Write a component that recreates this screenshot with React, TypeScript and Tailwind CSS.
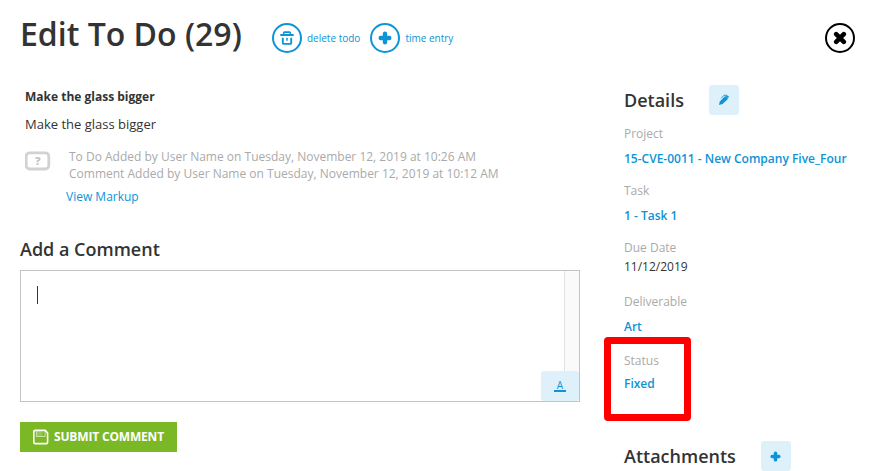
import type { ReactNode } from "react";

function PlusIcon({ size }: { size: number }) {
  return (
    <svg width={size} height={size} viewBox="0 0 14 14" fill="none" stroke="currentColor" strokeWidth="4.4" strokeLinecap="round">
      <path d="M7 2.7v8.6M2.7 7h8.6" />
    </svg>
  );
}

function TrashIcon() {
  return (
    <svg width="14" height="14" viewBox="0 0 14 14" fill="none" stroke="currentColor" strokeWidth="1.9">
      <path d="M1 4h12" strokeLinecap="round" />
      <path d="M3.7 3.6V1.9a.8.8 0 0 1 .8-.8h5a.8.8 0 0 1 .8.8v1.7" strokeWidth="1.6" />
      <path d="M2.8 6.8v5.1a1 1 0 0 0 1 1h6.4a1 1 0 0 0 1-1V6.8" />
      <path d="M7 6.8v3" strokeWidth="1.5" />
    </svg>
  );
}

function PencilIcon() {
  return (
    <svg width="12" height="12" viewBox="0 0 12 12" fill="none">
      <path d="M1 11l.8-3.6L7.2 1.9l2.9 2.8L4.6 10z" fill="currentColor" />
      <path d="M7.6 2.2l1-.9 2.3 1-.8 2z" fill="currentColor" />
      <path d="M3.2 4.2L6 1.2l3 .1" stroke="currentColor" strokeWidth="0.9" />
    </svg>
  );
}

function SaveIcon() {
  return (
    <svg width="16" height="16" viewBox="0 0 16 16" fill="none" stroke="currentColor">
      <path d="M2.2 1.4h10L14.6 4v9.2a1.4 1.4 0 0 1-1.4 1.4h-11a1.4 1.4 0 0 1-1.4-1.4V2.8a1.4 1.4 0 0 1 1.4-1.4z" strokeWidth="1.6" />
      <path d="M3.5 1.8v5.7h8.6V1.8" strokeWidth="1" opacity="0.6" />
      <path d="M4 2h5.5v5H4z" fill="currentColor" stroke="none" opacity="0.2" />
    </svg>
  );
}

function Action({ label, children }: { label: string; children: ReactNode }) {
  return (
    <a className="flex items-center gap-[5px] text-[10px] leading-[14px] text-[#0c94d6]">
      <span className="flex size-[30px] items-center justify-center rounded-full border-2 border-[#0c94d6]">{children}</span>
      {label}
    </a>
  );
}

function Field({ label, value, className }: { label: string; value: string; className: string }) {
  return (
    <div className={className}>
      <dt className="h-[25px] leading-[17px] text-[#aaa]">{label}</dt>
      <dd className="leading-[17px] font-semibold text-[#0c94d6]">{value}</dd>
    </div>
  );
}

export default function App() {
  return (
    <div className="h-[471px] w-[890px] overflow-hidden bg-white font-['Open_Sans',sans-serif] text-xs text-[#333]">
      <header className="flex h-[76px] pl-5 pr-[35px]">
        <h1 className="w-[252px] pt-[14px] text-[32px] leading-10 font-semibold whitespace-nowrap">Edit To Do (29)</h1>
        <div className="mt-[23px] flex h-[30px] gap-[10px]">
          <Action label="delete todo">
            <TrashIcon />
          </Action>
          <Action label="time entry">
            <PlusIcon size={14} />
          </Action>
        </div>
        <button className="mt-[23px] ml-auto flex size-[30px] items-center justify-center rounded-full border-2 border-black text-black">
          <svg width="14" height="14" viewBox="0 0 14 14" stroke="currentColor" strokeWidth="4.6" strokeLinecap="round">
            <path d="M3.2 3.2l7.6 7.6M10.8 3.2l-7.6 7.6" />
          </svg>
        </button>
      </header>

      <div className="flex">
        <main className="ml-5 w-[560px]">
          <section className="h-[164px] pt-3 pl-[5px]">
            <p className="leading-[17px] font-bold">Make the glass bigger</p>
            <p className="mt-[11px] text-[13px] leading-[17px]">Make the glass bigger</p>
            <div className="mt-[15px] flex">
              <svg className="mt-[3px]" width="26" height="20" viewBox="0 0 26 20">
                <rect x="1.2" y="1.8" width="22.6" height="16.2" rx="3.5" fill="none" stroke="#d2d2d2" strokeWidth="2.8" />
                <text x="12.8" y="13.7" textAnchor="middle" fontSize="11" fontWeight="800" fill="#c4c4c4">?</text>
              </svg>
              <div className="ml-[18px] leading-[17px] text-[#aaa]">
                <p>To Do Added by User Name on Tuesday, November 12, 2019 at 10:26 AM</p>
                <p>Comment Added by User Name on Tuesday, November 12, 2019 at 10:12 AM</p>
              </div>
            </div>
            <a className="mt-[6px] ml-[41px] block leading-[17px] text-[#0c94d6]">View Markup</a>
          </section>

          <h2 className="text-lg leading-[19px] font-semibold">Add a Comment</h2>
          <div className="mt-[11px] flex h-[132px] border border-[#c4c4c4]">
            <div className="flex-1 pt-[15px] pl-4">
              <span className="block h-[18px] w-px bg-[#333]" />
            </div>
            <div className="flex flex-col items-end">
              <div className="w-[15px] flex-1 border-l border-[#e3e3e3] bg-[#fafafa]" />
              <button className="flex h-[30px] w-[38px] items-center justify-center rounded-[3px] bg-[#def0fa] text-[#0c94d6]">
                <span className="flex h-[11px] w-3 items-center justify-center border-b-2 border-[#0c94d6] text-[10px] leading-none">A</span>
              </button>
            </div>
          </div>
          <button className="mt-5 flex h-[30px] w-[157px] items-center bg-[#7ab826] pl-[13px] font-bold tracking-[-0.17px] whitespace-nowrap text-white">
            <SaveIcon />
            <span className="ml-[5px]">SUBMIT COMMENT</span>
          </button>
        </main>

        <aside className="relative ml-11 w-[240px]">
          <div className="mt-[9px] flex h-[30px] items-center">
            <h2 className="w-[85px] text-lg font-semibold">Details</h2>
            <button className="flex size-[30px] items-center justify-center rounded-[3px] bg-[#def0fa] text-[#0c94d6]">
              <PencilIcon />
            </button>
          </div>
          <dl>
            <Field className="mt-[10px]" label="Project" value="15-CVE-0011 - New Company Five_Four" />
            <Field className="mt-[15px]" label="Task" value="1 - Task 1" />
            <div className="mt-[15px]">
              <dt className="h-[19px] leading-[17px] text-[#aaa]">Due Date</dt>
              <dd className="leading-[17px]">11/12/2019</dd>
            </div>
            <Field className="mt-[18px]" label="Deliverable" value="Art" />
            <div className="mt-[17px]">
              <dt className="h-[23px] leading-[17px] text-[#aaa]">Status</dt>
              <dd className="leading-[17px] font-semibold text-[#0c94d6]">Fixed</dd>
            </div>
          </dl>
          <div className="mt-[49px] flex h-[30px] items-center">
            <h2 className="w-[137px] text-lg font-semibold">Attachments</h2>
            <button className="flex size-[30px] items-center justify-center rounded-[3px] bg-[#def0fa] pr-px text-[#0c94d6]">
              <PlusIcon size={11} />
            </button>
          </div>
          {/* highlight around the status field */}
          <div className="absolute top-[261px] -left-5 h-[84px] w-[87px] rounded-[4px] border-[7px] border-[#fe0000]" />
        </aside>
      </div>
    </div>
  );
}
